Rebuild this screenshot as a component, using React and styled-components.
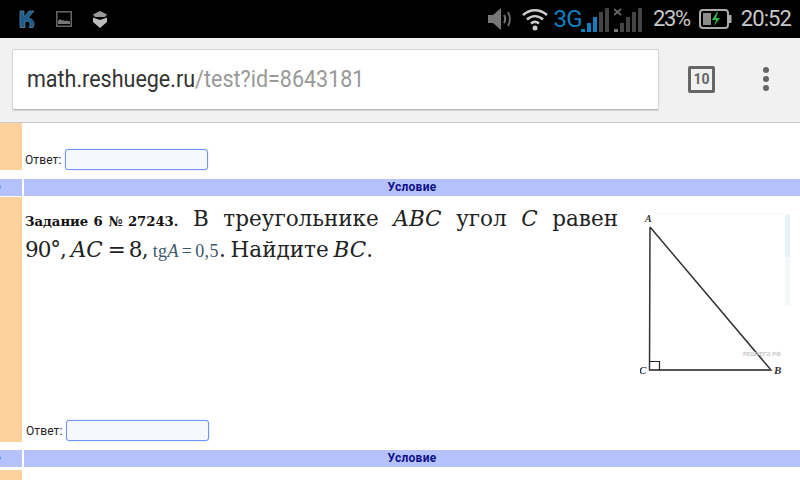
import React from 'react';
import styled, { createGlobalStyle } from 'styled-components';

const GlobalStyle = createGlobalStyle`
  html, body {
    margin: 0;
    padding: 0;
    background: #fff;
    overflow: hidden;
  }
`;

const peach = 'repeating-conic-gradient(#fdcb90 0 25%, #ffd8aa 0 50%) 0 0 / 2px 2px';
const blue = 'repeating-conic-gradient(#aebcfc 0 25%, #bcc8fb 0 50%) 0 0 / 2px 2px';

const Screen = styled.div`
  width: 800px;
  height: 480px;
  display: flex;
  flex-direction: column;
  overflow: hidden;
  font-family: Roboto, sans-serif;
`;

const StatusBar = styled.div`
  flex: 0 0 38px;
  display: flex;
  align-items: center;
  justify-content: space-between;
  background: #000;
  padding: 0 9px 0 18px;
  box-sizing: border-box;
`;

const StatusGroup = styled.div`
  display: flex;
  align-items: center;
  gap: ${props => props.$gap}px;
`;

const StatusItem = styled.span`
  display: flex;
  align-items: center;
  margin-left: ${props => props.$left || 0}px;
  color: ${props => props.$color || '#c8c8c8'};
  font-size: ${props => props.$size || 22}px;
  line-height: 38px;
  height: 38px;
  letter-spacing: ${props => props.$spacing || 0}px;
`;

const Toolbar = styled.div`
  flex: 0 0 85px;
  box-sizing: border-box;
  display: flex;
  align-items: center;
  background: #f1f1f1;
  border-bottom: 1px solid #c8c8c8;
  padding: 0 30px 2px 12px;
`;

const UrlBox = styled.div`
  width: 647px;
  height: 61px;
  box-sizing: border-box;
  display: flex;
  align-items: center;
  padding-left: 14px;
  background: #fff;
  border: 1px solid #d6d6d6;
  border-bottom-color: #b8b8b8;
  border-radius: 2px;
  box-shadow: 0 1px 1px rgba(0, 0, 0, 0.12);
`;

const UrlText = styled.span`
  display: block;
  font-size: 24px;
  color: #999;
  white-space: nowrap;
  transform: scaleX(0.896);
  transform-origin: left center;
`;

const Host = styled.span`
  color: #333;
`;

const TabCount = styled.div`
  width: 27px;
  height: 27px;
  box-sizing: border-box;
  margin-left: 29px;
  border: 3px solid #666;
  border-radius: 2px;
  display: flex;
  align-items: center;
  justify-content: center;
  font-size: 14px;
  font-weight: 700;
  color: #666;
`;

const MenuDots = styled.div`
  margin-left: 48px;
  display: flex;
  flex-direction: column;
  gap: 3px;
`;

const Dot = styled.span`
  width: 6px;
  height: 6px;
  border-radius: 50%;
  background: #666;
`;

const Content = styled.div`
  flex: 1;
  display: flex;
  flex-direction: column;
  min-height: 0;
`;

const Row = styled.div`
  display: grid;
  grid-template-columns: 22px 1fr;
  column-gap: 2px;
  flex: 0 0 ${props => props.$height}px;
  margin-top: ${props => props.$top || 0}px;
`;

const Side = styled.div`
  background: ${props => (props.$blue ? blue : peach)};
  overflow: hidden;
`;

const SideGlyph = styled.span`
  display: block;
  margin-left: -6px;
  font: 700 12px/17px Roboto, sans-serif;
  color: #000080;
`;

const Header = styled.div`
  background: ${blue};
  text-align: center;
  font: 700 12px/17px Roboto, sans-serif;
  letter-spacing: 0.3px;
  color: #10108a;
`;

const AnswerCell = styled.div`
  display: flex;
  align-items: flex-end;
  gap: 4px;
  padding-left: 1px;
`;

const AnswerLabel = styled.span`
  font: 12px/20px Roboto, sans-serif;
  letter-spacing: 0.1px;
  color: #222;
`;

const AnswerInput = styled.div`
  width: 143px;
  height: 21px;
  box-sizing: border-box;
  background: repeating-conic-gradient(#f1f4fd 0 25%, #fbfcff 0 50%) 0 0 / 2px 2px;
  border: 1px solid #6f92f5;
  border-radius: 3px;
  box-shadow: 0 0 1px #6f92f5;
`;

const QuestionCell = styled.div`
  display: flex;
  flex-direction: column;
  justify-content: space-between;
  padding-left: 1px;
  padding-bottom: 1px;
`;

const QuestionBody = styled.div`
  display: flex;
  align-items: flex-start;
`;

const Statement = styled.div`
  width: 593px;
  padding-top: 8px;
  font-family: 'DejaVu Serif', serif;
  font-size: 21.5px;
  line-height: 28px;
  word-spacing: -2px;
  color: #222;
`;

const JustifiedLine = styled.div`
  text-align: justify;
  text-align-last: justify;
`;

const TaskTitle = styled.b`
  display: inline-block;
  font-size: 13.2px;
  word-spacing: 0.8px;
  color: #111;
`;

const Tight = styled.span`
  letter-spacing: ${props => props.$spacing}px;
`;

const Formula = styled.span`
  font-family: 'Liberation Serif', serif;
  font-size: 18px;
  letter-spacing: 0.4px;
  color: #40586e;
`;

const FigureBox = styled.div`
  flex: none;
  margin: 15px 0 0 22px;
  line-height: 0;
`;

function Vk() {
  return (
    <svg width="18" height="20" viewBox="0 0 18 20">
      <path d="M2 2h4v6l5-6h5l-6 7c3 .5 6 2.500 6 5.500 0 1.500-.5 3-1 4h-4c.8-1 1.200-2.500 1-3.800-.2-1.500-2-2.700-5-2.700v6.500H2z" fill="#1c5c8c" stroke="#5a7f9c" strokeWidth="0.8" />
    </svg>
  );
}

function PictureIcon() {
  return (
    <svg width="16" height="16" viewBox="0 0 16 16">
      <rect x="0.750" y="0.750" width="14.500" height="14.500" fill="none" stroke="#666" strokeWidth="1.500" />
      <path d="M2 12v-2l2-2 2 1.500 1-.5 2 1 2-.5 3 1V13H2z" fill="#777" />
    </svg>
  );
}

function ShieldIcon() {
  return (
    <svg width="16" height="17" viewBox="0 0 16 17">
      <path d="M1 3.500 8 0l7 3.500-2 2.500H3z" fill="#999" />
      <path d="M1 6.500 8 9l7-2.500V11l-7 6-7-6z" fill="#bbb" />
    </svg>
  );
}

function Speaker() {
  return (
    <svg width="25" height="24" viewBox="0 0 25 24">
      <path d="M0 8h5l8-7v22l-8-7H0z" fill="#777" />
      <path d="M16 8c1.500 2.500 1.500 5.500 0 8" fill="none" stroke="#777" strokeWidth="2" />
      <path d="M20 5c2.500 4.500 2.500 9.500 0 14" fill="none" stroke="#666" strokeWidth="2" />
    </svg>
  );
}

function Wifi() {
  return (
    <svg width="26" height="24" viewBox="0 0 26 24">
      <path d="M1 8c7-6.500 17-6.500 24 0" fill="none" stroke="#ccc" strokeWidth="2.500" />
      <path d="M5 12.500c5-4.500 11-4.500 16 0" fill="none" stroke="#ccc" strokeWidth="2.500" />
      <path d="M9 16.500c2.500-2 5.500-2 8 0" fill="none" stroke="#ccc" strokeWidth="2.500" />
      <circle cx="13" cy="21" r="2.500" fill="#ccc" />
    </svg>
  );
}

const signalBars = [3, 9, 15, 20, 24];

function Signal({ lit, cross }) {
  return (
    <svg width="28" height="25" viewBox="0 0 28 25">
      {signalBars.map((height, index) => (
        <rect
          key={height}
          x={index * 6}
          y={25 - height}
          width="4"
          height={height}
          fill={index < lit ? '#0f7fc0' : cross && index === 0 ? '#777' : '#444'}
        />
      ))}
      {cross && <path d="M0 2l7 6M7 2L0 8" stroke="#666" strokeWidth="2" />}
    </svg>
  );
}

function Battery() {
  return (
    <svg width="33" height="20" viewBox="0 0 33 20">
      <rect x="1" y="1" width="28" height="18" rx="3" fill="none" stroke="#aaa" strokeWidth="2" />
      <rect x="29.500" y="6" width="3" height="8" fill="#aaa" />
      <rect x="4" y="4" width="8" height="12" fill="#8c8c8c" />
      <path d="M18 3l-5 8h4l-2 6 6-8h-4l2-6z" fill="#39b54a" />
    </svg>
  );
}

function Triangle() {
  return (
    <svg width="155" height="166" viewBox="640 212 155 166">
      <path d="M655 214H790" stroke="#eef2f2" strokeDasharray="1 1" />
      <rect x="785" y="215" width="5" height="42" fill="#e3f3f5" />
      <rect x="785" y="257" width="5" height="48" fill="#f3f8f9" />
      <path d="M650 227L649.500 370H771L650 227" fill="none" stroke="#333" strokeWidth="1.500" />
      <path d="M650 370H771" stroke="#555" strokeWidth="2" />
      <path d="M650 361.500h9.500V370" fill="none" stroke="#222" strokeWidth="1.200" />
      <text x="645" y="222" fontFamily="'Liberation Serif', serif" fontStyle="italic" fontWeight="700" fontSize="10" fill="#333">A</text>
      <text x="639" y="374" fontFamily="'Liberation Serif', serif" fontStyle="italic" fontWeight="700" fontSize="11" fill="#333">C</text>
      <text x="774" y="374" fontFamily="'Liberation Serif', serif" fontStyle="italic" fontWeight="700" fontSize="11" fill="#333">B</text>
      <text x="743" y="356" fontFamily="Roboto, sans-serif" fontWeight="700" fontSize="6" fill="#c8c8c8">РЕШУЕГЭ.РФ</text>
    </svg>
  );
}

export default function App() {
  return (
    <Screen>
      <GlobalStyle />
      <StatusBar>
        <StatusGroup $gap={20}>
          <Vk />
          <PictureIcon />
          <ShieldIcon />
        </StatusGroup>
        <StatusGroup $gap={0}>
          <StatusItem><Speaker /></StatusItem>
          <StatusItem $left={9}><Wifi /></StatusItem>
          <StatusItem $left={5} $color="#0f7fc0" $size={24} $spacing={-0.6}>3G</StatusItem>
          <StatusItem $left={-1}><Signal lit={3} /></StatusItem>
          <StatusItem $left={5}><Signal lit={0} cross /></StatusItem>
          <StatusItem $left={11} $spacing={-1.4}>23%</StatusItem>
          <StatusItem $left={9}><Battery /></StatusItem>
          <StatusItem $left={9} $spacing={-0.9}>20:52</StatusItem>
        </StatusGroup>
      </StatusBar>
      <Toolbar>
        <UrlBox>
          <UrlText><Host>math.reshuege.ru</Host>/test?id=8643181</UrlText>
        </UrlBox>
        <TabCount>10</TabCount>
        <MenuDots><Dot /><Dot /><Dot /></MenuDots>
      </Toolbar>
      <Content>
        <Row $height={47}>
          <Side />
          <AnswerCell>
            <AnswerLabel>Ответ:</AnswerLabel>
            <AnswerInput />
          </AnswerCell>
        </Row>
        <Row $height={17} $top={9}>
          <Side $blue><SideGlyph>е</SideGlyph></Side>
          <Header>Условие</Header>
        </Row>
        <Row $height={245} $top={1}>
          <Side />
          <QuestionCell>
            <QuestionBody>
              <Statement>
                <JustifiedLine>
                  <TaskTitle>Задание 6 № 27243.</TaskTitle>{' '}
                  В треугольнике <i>ABC</i> угол <i>C</i> равен
                </JustifiedLine>
                <div>
                  <Tight $spacing={-1}>90°,</Tight> <i>AC</i> <Tight $spacing={-0.8}>= 8,</Tight> <Formula>tg<i>A</i> = 0,5</Formula>. Найдите <i>BC</i>.
                </div>
              </Statement>
              <FigureBox><Triangle /></FigureBox>
            </QuestionBody>
            <AnswerCell>
              <AnswerLabel>Ответ:</AnswerLabel>
              <AnswerInput />
            </AnswerCell>
          </QuestionCell>
        </Row>
        <Row $height={17} $top={8}>
          <Side $blue><SideGlyph>е</SideGlyph></Side>
          <Header>Условие</Header>
        </Row>
        <Row $height={20} $top={3}>
          <Side />
          <div />
        </Row>
      </Content>
    </Screen>
  );
}
